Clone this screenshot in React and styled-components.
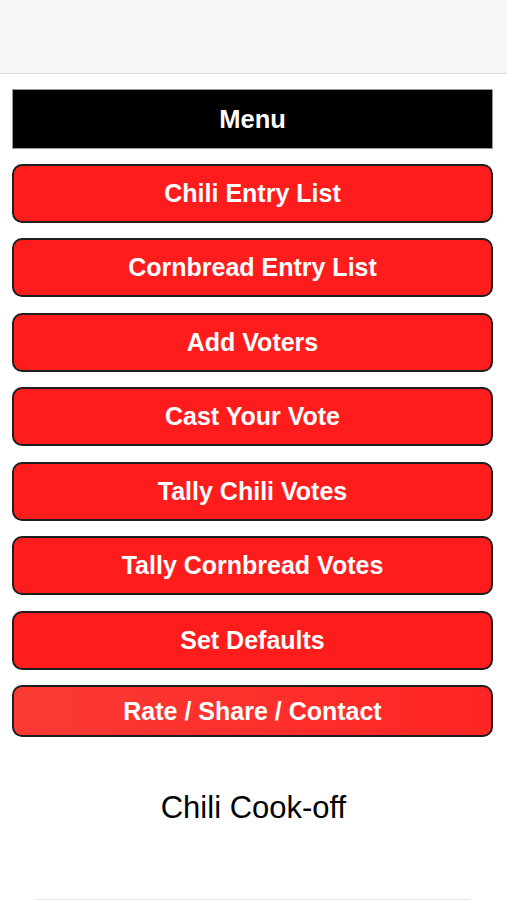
import React from "react";
import styled, { createGlobalStyle } from "styled-components";

const Global = createGlobalStyle`
  html, body { margin: 0; padding: 0; background: #ffffff; }
  body { font-family: "Liberation Sans", Arial, sans-serif; }
`;

const Page = styled.div`
  width: 507px;
  height: 900px;
  display: flex;
  flex-direction: column;
  background: #ffffff;
  overflow: hidden;
`;

const TopBar = styled.header`
  height: 73px;
  flex: none;
  background: #f7f7f7;
  border-bottom: 1px solid #dcdcdc;
`;

const Menu = styled.nav`
  display: flex;
  flex-direction: column;
  gap: 15.5px;
  padding: 15px 14px 0 12px;
`;

const MenuTitle = styled.div`
  height: 60px;
  background: #000000;
  border: 1px solid #9a9a9a;
  box-sizing: border-box;
  display: flex;
  align-items: center;
  justify-content: center;
  color: #ffffff;
  font-weight: 700;
  font-size: 25.5px;
  margin-bottom: -1px;
`;

const MenuButton = styled.button`
  height: ${(p) => (p.$short ? "52px" : "59px")};
  box-sizing: border-box;
  border: 2px solid #1e1e1e;
  border-radius: 10px;
  background: ${(p) =>
    p.$short ? "linear-gradient(90deg, #fb3a33 0%, #ff2525 100%)" : "#fe1c1c"};
  color: #ffffff;
  font-family: "Liberation Sans", Arial, sans-serif;
  font-weight: 700;
  font-size: 25px;
  display: flex;
  align-items: center;
  justify-content: center;
  padding: 0;
  cursor: pointer;
`;

const Footer = styled.div`
  flex: 1;
  display: flex;
  flex-direction: column;
  align-items: center;
`;

const AppName = styled.div`
  margin-top: 51px;
  font-size: 31px;
  color: #000000;
  line-height: 40px;
`;

const Rule = styled.div`
  margin-top: auto;
  width: 434px;
  height: 1px;
  background: #e6e6e6;
  margin-left: -1px;
`;

const items = [
  "Chili Entry List",
  "Cornbread Entry List",
  "Add Voters",
  "Cast Your Vote",
  "Tally Chili Votes",
  "Tally Cornbread Votes",
  "Set Defaults",
];

export default function App() {
  return (
    <Page>
      <Global />
      <TopBar />
      <Menu>
        <MenuTitle>Menu</MenuTitle>
        {items.map((t) => (
          <MenuButton key={t}>{t}</MenuButton>
        ))}
        <MenuButton $short>Rate / Share / Contact</MenuButton>
      </Menu>
      <Footer>
        <AppName>Chili Cook-off</AppName>
        <Rule />
      </Footer>
    </Page>
  );
}
